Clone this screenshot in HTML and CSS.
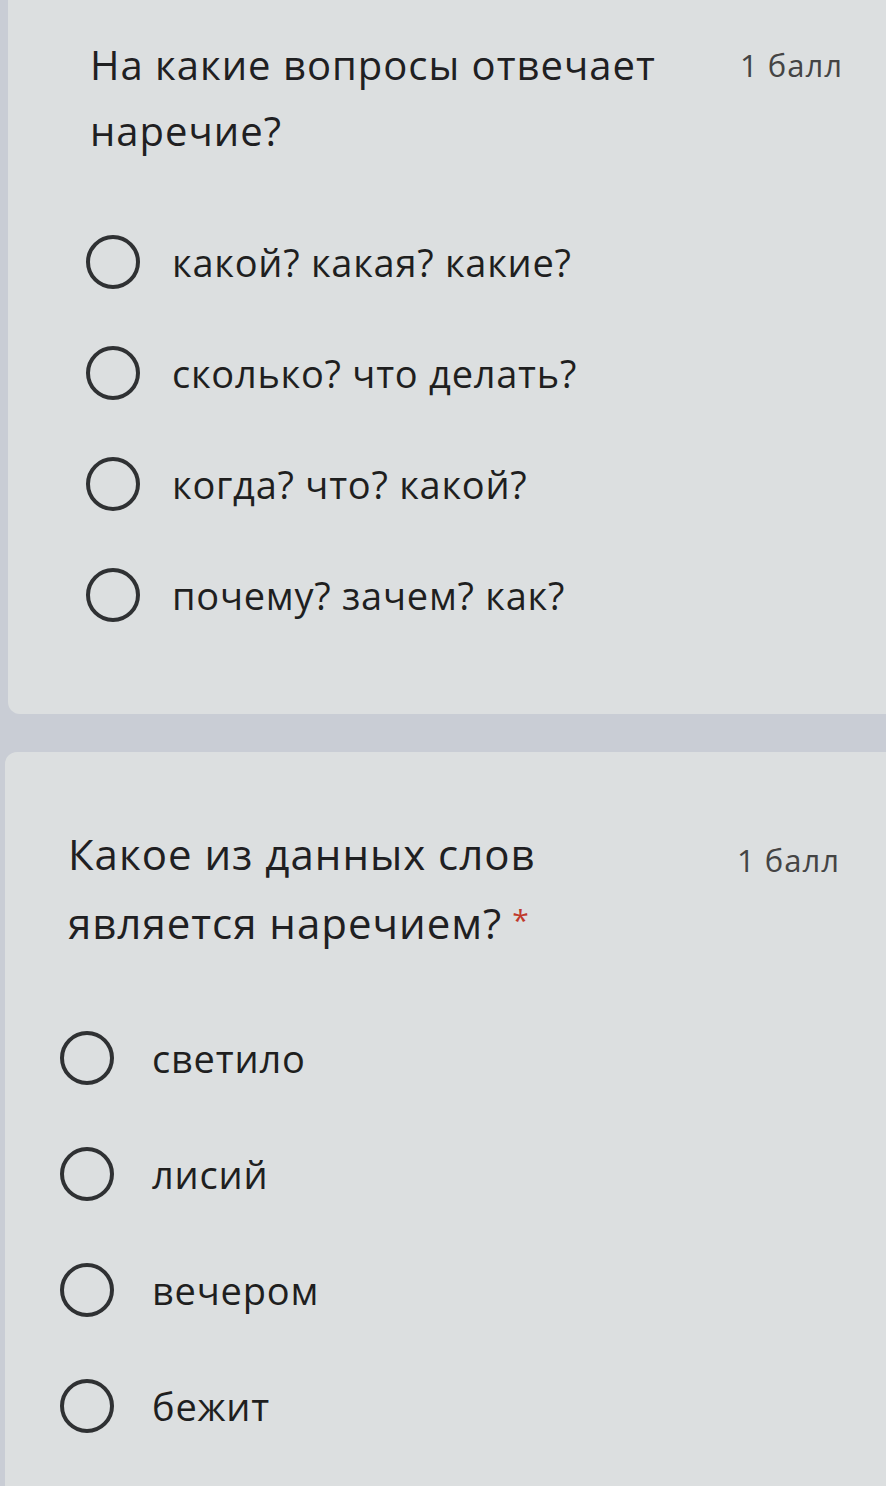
FILE: index.html
```html
<!DOCTYPE html>
<html lang="ru">
<head>
<meta charset="utf-8">
<title>Форма</title>
<link rel="stylesheet" href="styles.css">
</head>
<body>
<main class="page">
  <section class="card card-first">
    <div class="q-head">
      <h2 class="q-title">На какие вопросы отвечает наречие?</h2>
      <span class="q-points">1 балл</span>
    </div>
    <ul class="options">
      <li class="option"><span class="radio"></span><span class="label">какой? какая? какие?</span></li>
      <li class="option"><span class="radio"></span><span class="label">сколько? что делать?</span></li>
      <li class="option"><span class="radio"></span><span class="label">когда? что? какой?</span></li>
      <li class="option"><span class="radio"></span><span class="label">почему? зачем? как?</span></li>
    </ul>
  </section>
  <section class="card card-second">
    <div class="q-head">
      <h2 class="q-title">Какое из данных слов является наречием?<span class="req">*</span></h2>
      <span class="q-points">1 балл</span>
    </div>
    <ul class="options options-2">
      <li class="option"><span class="radio"></span><span class="label">светило</span></li>
      <li class="option"><span class="radio"></span><span class="label">лисий</span></li>
      <li class="option"><span class="radio"></span><span class="label">вечером</span></li>
      <li class="option"><span class="radio"></span><span class="label">бежит</span></li>
    </ul>
  </section>
</main>
</body>
</html>
```
FILE: styles.css
```css
html, body {
  margin: 0;
  padding: 0;
}
body {
  background: #c9cdd5;
  font-family: "Open Sans", Roboto, "Liberation Sans", sans-serif;
  color: #222;
  width: 886px;
  height: 1486px;
  overflow: hidden;
}
.page {
  display: flex;
  flex-direction: column;
  gap: 38px;
}
.card {
  background: #dcdfe0;
  border-radius: 12px;
  margin-right: -20px;
}
.card-first {
  margin-left: 8px;
  margin-top: -20px;
  padding: 52px 0 64px 0;
  border-top-left-radius: 0;
}
.card-second {
  margin-left: 5px;
  padding: 69px 0 40px 0;
  height: 700px;
}
.q-head {
  display: flex;
  align-items: flex-start;
}
.card-first .q-head { padding-left: 82px; padding-right: 63px; }
.card-second .q-head { padding-left: 63px; padding-right: 66px; }
.q-title {
  margin: 0;
  font-weight: 400;
  font-size: 40px;
  letter-spacing: 1px;
  line-height: 66px;
  flex: 0 0 auto;
  color: #1f2022;
}
.card-first .q-title { width: 600px; }
.card-second .q-title { width: 490px; font-size: 42px; }
.req {
  color: #c0392b;
  font-size: 30px;
  margin-left: 10px;
  vertical-align: 8px;
}
.q-points {
  margin-left: auto;
  font-size: 31px;
  letter-spacing: 1px;
  color: #444;
  line-height: 66px;
}
.card-second .q-points { padding-top: 6px; }
.options {
  list-style: none;
  margin: 42px 0 0 0;
  padding: 0 0 0 78px;
}
.options-2 {
  margin-top: 44px;
  padding-left: 55px;
}
.option {
  display: flex;
  align-items: center;
  height: 111px;
}
.options-2 .option { height: 116px; }
.radio {
  width: 46px;
  height: 46px;
  border: 4px solid #2f3133;
  border-radius: 50%;
  flex: 0 0 auto;
}
.label {
  margin-left: 32px;
  font-size: 38px;
  letter-spacing: 0.75px;
  color: #1f1f1f;
}
.options-2 .label { margin-left: 38px; letter-spacing: 0.8px; }
```
